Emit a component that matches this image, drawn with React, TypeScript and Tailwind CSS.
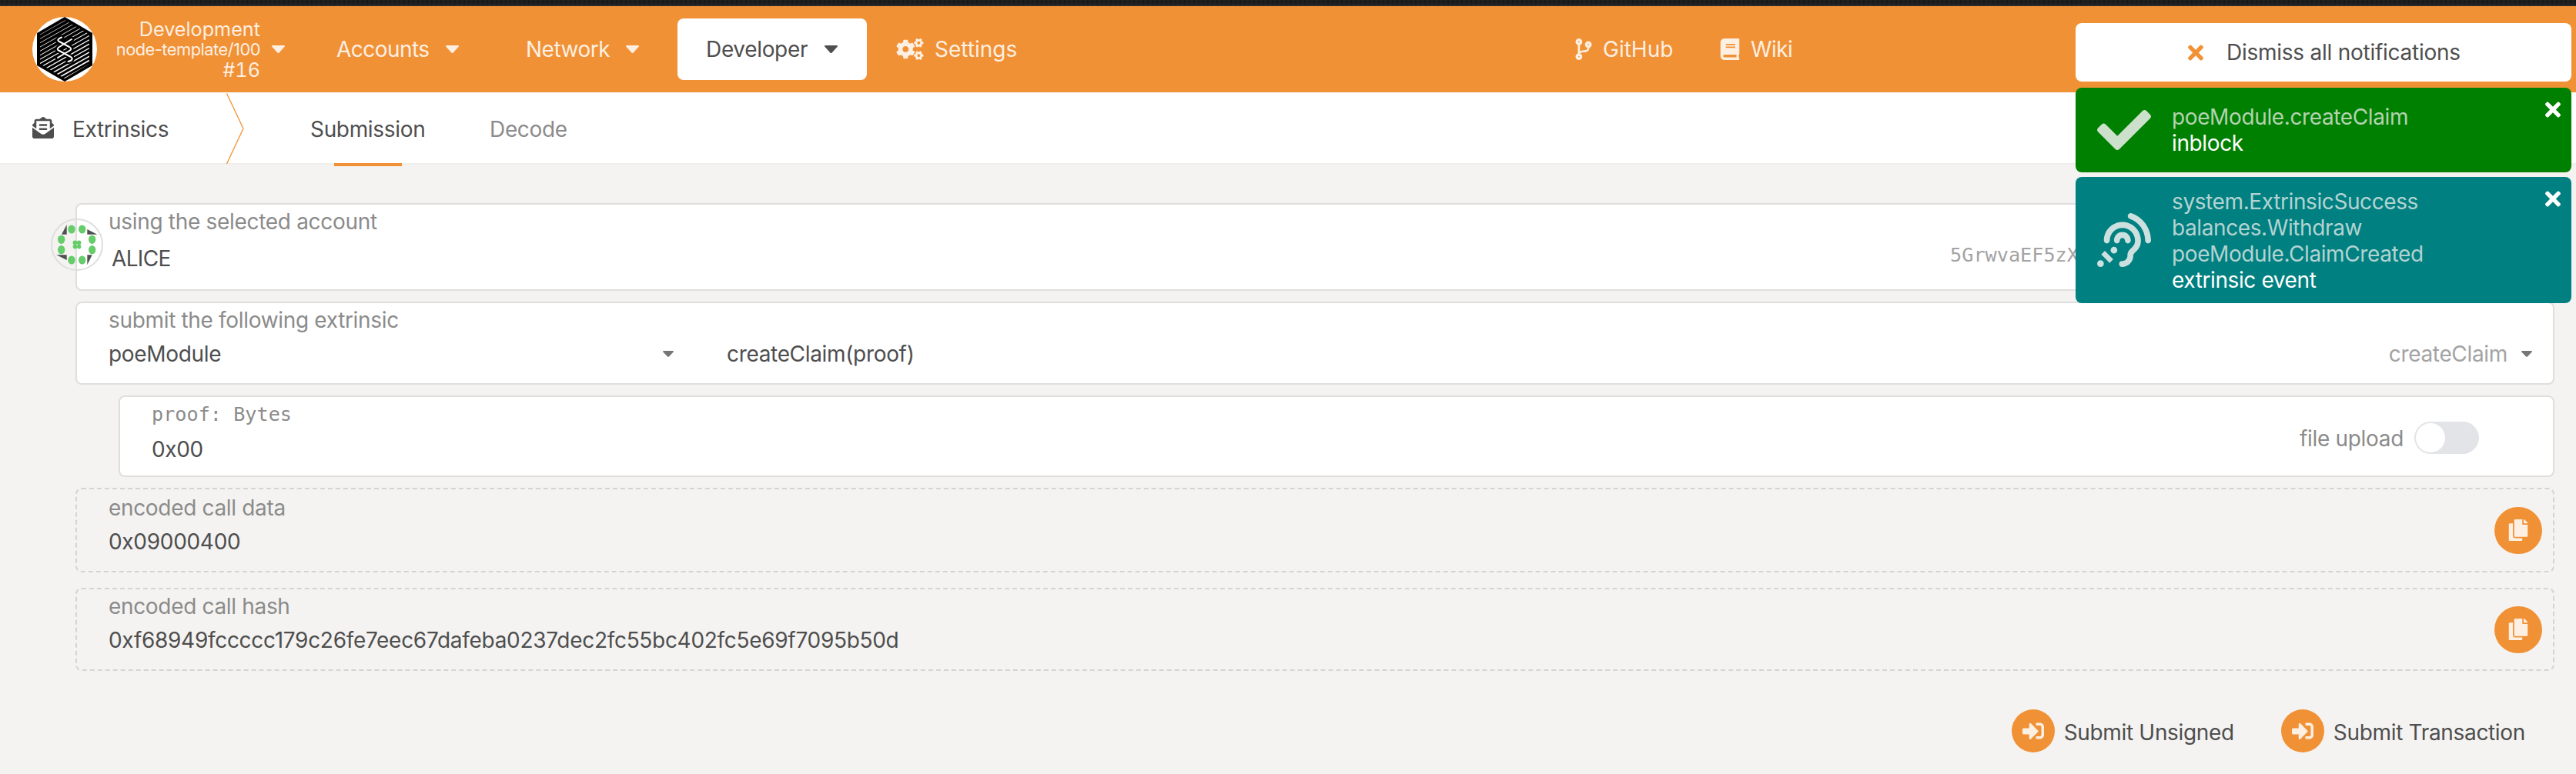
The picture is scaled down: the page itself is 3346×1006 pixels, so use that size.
import React from 'react';
import {
  FaAssistiveListeningSystems,
  FaBook,
  FaCheck,
  FaCodeBranch,
  FaCogs,
  FaCopy,
  FaEnvelopeOpenText,
  FaSignInAlt,
  FaTimes,
} from 'react-icons/fa';

function Caret({ className }: { className: string }) {
  return (
    <svg viewBox="0 0 17 10" preserveAspectRatio="none" fill="currentColor" className={`shrink-0 ${className}`}>
      <path d="M1.2 0h14.6c1 0 1.5 1 .8 1.8L9.6 9.4a1.5 1.5 0 0 1-2.2 0L.4 1.8C-.3 1 .2 0 1.2 0z" />
    </svg>
  );
}

const stripes = Array.from({ length: 16 }, (_, i) => 43 + i * 5.35);

function ChainLogo() {
  return (
    <svg viewBox="12 22 84 84" className="h-[84px] w-[84px] shrink-0">
      <defs>
        <clipPath id="hex-inner">
          <path d="M54 26 86 44.5V83L54 102 22 83V44.5z" />
        </clipPath>
      </defs>
      <circle cx="54" cy="64" r="42" fill="#fff" />
      <path d="M54 22 90 43v42l-36 21-36-21V43z" fill="#000" />
      <g clipPath="url(#hex-inner)" stroke="#fff">
        {stripes.map((y, i) => (
          <path key={y} d={`M22 ${y + 2}L86 ${y - 34}`} strokeWidth={0.6 + i * 0.08} />
        ))}
      </g>
      <g fill="none" strokeLinecap="round" strokeLinejoin="round">
        <g stroke="#000" strokeWidth="6.5">
          <path d="M50 48.5c-5 2-6 4-3 5.500L60 61c3 2 3 3.500 0 5L45 75" />
          <path d="M63 51 47 61c-3 2-3 3.500 0 5l15 8c3 2 2 4.500-3.500 6" />
        </g>
        <g stroke="#fff" strokeWidth="2">
          <path d="M50 48.5c-5 2-6 4-3 5.500L60 61c3 2 3 3.500 0 5L45 75" />
          <path d="M63 51 47 61c-3 2-3 3.500 0 5l15 8c3 2 2 4.500-3.500 6" />
        </g>
      </g>
    </svg>
  );
}

const outerDots = [
  [27, 14], [40.7, 14], [53.7, 27.3], [53.7, 40.7], [40.7, 54], [27, 54], [13.7, 40.7], [13.7, 27.3],
];
const innerDots = [
  [31.4, 31.4], [36.6, 31.4], [36.6, 36.6], [31.4, 36.6],
];

function Identicon() {
  return (
    <svg viewBox="0 0 68 68" className="absolute top-[18px] -left-[34px] h-[68px] w-[68px]">
      <circle cx="34" cy="34" r="33" fill="none" stroke="#dedede" strokeWidth="2" />
      <g fill="#505050">
        <path d="M20.700 8v12.700H14z" />
        <path d="M47.300 14v6.700h13z" />
        <path d="M47.300 47.300h6.400l-6.400 13z" />
        <path d="M7.300 47.300h13.400V54z" />
      </g>
      <g fill="#66cd6b">
        {outerDots.map(([x, y]) => (
          <ellipse key={`${x}-${y}`} cx={x} cy={y} rx="4.700" ry="5.600" />
        ))}
        {innerDots.map(([x, y]) => (
          <circle key={`${x}-${y}`} cx={x} cy={y} r="2.800" />
        ))}
      </g>
    </svg>
  );
}

function Header() {
  return (
    <header className="flex h-[112px] items-center bg-[#f19135] pl-[42px] text-[#fdefe2]">
      <ChainLogo />
      <div className="flex w-[212px] flex-col items-end pt-[2px] text-[25.2px] tracking-normal">
        <span className="leading-[26px]">Development</span>
        <span className="text-[21.84px] leading-[26px] tracking-[-0.5px]">node-template/100</span>
        <span className="leading-[28px] tabular-nums tracking-normal">#16</span>
      </div>
      <Caret className="ml-[15px] h-[10px] w-[17px]" />
      <span className="ml-[67px] w-[122px] tracking-[-0.55px]">Accounts</span>
      <Caret className="ml-[20px] h-[10px] w-[17px]" />
      <span className="ml-[87px] w-[110px] tracking-[-0.5px]">Network</span>
      <Caret className="ml-[20px] h-[10px] w-[17px]" />
      <div className="ml-[50px] flex h-[80px] w-[246px] items-center rounded-[8px] bg-white pl-[37px] text-[#4e4e4e]">
        <span className="w-[134px]">Developer</span>
        <Caret className="ml-[20px] h-[10px] w-[17px]" />
      </div>
      <FaCogs className="ml-[38px] h-[28px] w-[36px] shrink-0" />
      <span className="ml-[14px] w-[120px] tracking-[0px]">Settings</span>
      <FaCodeBranch className="ml-[712px] h-[28px] w-[22px] shrink-0" />
      <span className="ml-[14px] w-[90px] tracking-[0px]">GitHub</span>
      <FaBook className="ml-[62px] h-[28px] w-[26px] shrink-0" />
      <span className="ml-[14px] w-[56px] tracking-[-0.55px]">Wiki</span>
      <div className="ml-auto flex flex-col items-end pt-[4px] pr-[29px] text-[24px] leading-[26px]">
        <span>Substrate Node v3.0.0</span>
        <span>api v4.6.2</span>
        <span>apps v0.83.3-26</span>
      </div>
    </header>
  );
}

function Tabs() {
  return (
    <nav className="flex h-[94px] items-center border-b-2 border-[#efeeed] bg-white pt-[4px] pl-[42px] text-[#4e4e4e]">
      <FaEnvelopeOpenText className="-mt-[4px] h-[28px] w-[28px] shrink-0" />
      <span className="ml-[24px] w-[125px]">Extrinsics</span>
      <svg viewBox="0 0 23 92" fill="none" stroke="#f19135" strokeWidth="1.300" className="-mt-[3px] ml-[75px] h-[92px] w-[23px] shrink-0">
        <path d="M.5.500 22 46 .5 92" />
      </svg>
      <div className="relative ml-[86px] flex h-[88px] w-[149px] items-center">
        <span>Submission</span>
        <div className="absolute -bottom-[4px] left-[31px] h-[4px] w-[88px] bg-[#f19135]" />
      </div>
      <span className="ml-[84px] text-[#8b8b8b]">Decode</span>
    </nav>
  );
}

function CopyButton() {
  return (
    <div className="ml-auto flex h-[61px] w-[62px] shrink-0 items-center justify-center rounded-full bg-[#f19135] text-[#fdefe2]">
      <FaCopy className="h-[28px] w-[26px]" />
    </div>
  );
}

function SubmitButton({ label }: { label: string }) {
  return (
    <div className="flex items-center">
      <div className="flex h-[56px] w-[56px] shrink-0 items-center justify-center rounded-full bg-[#f19135] text-[#fdefe2]">
        <FaSignInAlt className="h-[28px] w-[28px]" />
      </div>
      <span className="mt-[3px] ml-[12px]">{label}</span>
    </div>
  );
}

function Form() {
  return (
    <main className="flex flex-col pt-[50px] pr-[28px] pl-[98px] leading-[28px] text-[#4e4e4e]">
      <section className="relative flex h-[114px] flex-col rounded-[8px] border-2 border-[#dedede] bg-white pt-[8px] pl-[41px]">
        <div className="text-[#8b8b8b] tracking-[-0.31px]">using the selected account</div>
        <div className="mt-[20px] flex pl-[4px] tracking-[-0.650px]">
          <span>ALICE</span>
          <span className="mt-[-4px] mr-[55px] ml-auto font-['DejaVu_Sans_Mono',monospace] text-[25.200px] tracking-normal text-[#a3a3a3]">
            5GrwvaEF5zXb26Fz9rcQpDWS57CtERHpNehXCPcNoHGKutQY
          </span>
        </div>
        <div className="absolute top-0 left-0">
          <Identicon />
        </div>
      </section>

      <section className="mt-[14px] h-[108px] rounded-[8px] border-2 border-[#dedede] bg-white pt-[8px] pl-[41px]">
        <div className="text-[#8b8b8b]">submit the following extrinsic</div>
        <div className="mt-[16px] flex items-center">
          <span className="w-[720px]">poeModule</span>
          <Caret className="h-[8px] w-[14px] text-[#767676]" />
          <span className="ml-[69px]">createClaim(proof)</span>
          <span className="ml-auto text-[#a3a3a3]">createClaim</span>
          <Caret className="mr-[27px] ml-[18px] h-[8px] w-[14px] text-[#767676]" />
        </div>
      </section>

      <section className="mt-[14px] ml-[56px] flex h-[106px] rounded-[8px] border-2 border-[#dedede] bg-white pt-[8px] pl-[41px]">
        <div className="flex flex-col">
          <span className="mt-[1px] font-['DejaVu_Sans_Mono',monospace] text-[25.200px] tracking-normal text-[#8b8b8b]">proof: Bytes</span>
          <span className="mt-[17px]">0x00</span>
        </div>
        <div className="mt-[24px] mr-[96px] ml-auto flex h-[42px] items-center">
          <span className="mt-[1px] text-[#8b8b8b]">file upload</span>
          <div className="ml-[14px] flex h-[42px] w-[84px] items-center rounded-full bg-[#e2e4e7] pl-[2px]">
            <div className="h-[38px] w-[38px] rounded-full bg-white" />
          </div>
        </div>
      </section>

      <section className="mt-[14px] flex h-[110px] items-center rounded-[8px] border-2 border-dashed border-[#d4d4d3] pr-[14px] pl-[41px]">
        <div className="flex h-full flex-col pt-[10px]">
          <span className="text-[#8b8b8b]">encoded call data</span>
          <span className="mt-[16px] tracking-[-0.300px]">0x09000400</span>
        </div>
        <CopyButton />
      </section>

      <section className="mt-[20px] flex h-[108px] items-center rounded-[8px] border-2 border-dashed border-[#d4d4d3] pr-[14px] pl-[41px]">
        <div className="flex h-full flex-col pt-[8px]">
          <span className="text-[#8b8b8b]">encoded call hash</span>
          <span className="mt-[16px] tracking-[-0.300px]">0xf68949fccccc179c26fe7eec67dafeba0237dec2fc55bc402fc5e69f7095b50d</span>
        </div>
        <CopyButton />
      </section>

      <div className="mt-[50px] mr-[38px] flex justify-end gap-[61px]">
        <SubmitButton label="Submit Unsigned" />
        <SubmitButton label="Submit Transaction" />
      </div>
    </main>
  );
}

function Notifications() {
  return (
    <aside className="absolute top-[30px] right-[6px] flex w-[644px] flex-col leading-[34px]">
      <div className="flex h-[76px] items-center rounded-[8px] bg-white pl-[146px] text-[#4e4e4e]">
        <FaTimes className="h-[29px] w-[20px] shrink-0 text-[#f19135]" />
        <span className="ml-[30px] tracking-[-0.250px]">Dismiss all notifications</span>
      </div>
      <div className="relative mt-[8px] flex h-[110px] items-center rounded-[8px] bg-[#008000] pl-[28px] tracking-[-0.38px]">
        <FaCheck className="h-[70px] w-[70px] shrink-0 text-[#cce0cc]" />
        <div className="ml-[27px] flex flex-col text-white">
          <span className="text-[#b3d3b0]">poeModule.createClaim</span>
          <span>inblock</span>
        </div>
        <FaTimes className="absolute top-[14px] right-[14px] h-[29px] w-[20px] text-white" />
      </div>
      <div className="relative mt-[6px] flex h-[164px] items-center rounded-[8px] bg-[#008080] pl-[28px] tracking-[-0.4px]">
        <FaAssistiveListeningSystems className="h-[70px] w-[70px] shrink-0 text-[#cce0e0]" />
        <div className="ml-[27px] flex flex-col pt-[2px] text-white">
          <span className="text-[#b3d3d2]">system.ExtrinsicSuccess</span>
          <span className="text-[#b3d3d2]">balances.Withdraw</span>
          <span className="text-[#b3d3d2]">poeModule.ClaimCreated</span>
          <span>extrinsic event</span>
        </div>
        <FaTimes className="absolute top-[14px] right-[14px] h-[29px] w-[20px] text-white" />
      </div>
    </aside>
  );
}

export default function App() {
  return (
    <div className="relative h-[1006px] w-[3346px] overflow-hidden bg-[#f4f3f1] font-['Inter',sans-serif] text-[28px] tracking-[-0.33px] whitespace-nowrap">
      <div className="h-[8px] border-b-2 border-[#2d2d2f] bg-[#1f1f20] bg-[radial-gradient(#121212_1px,transparent_1.300px)] bg-[length:6px_4px]" />
      <Header />
      <Tabs />
      <Form />
      <Notifications />
    </div>
  );
}
